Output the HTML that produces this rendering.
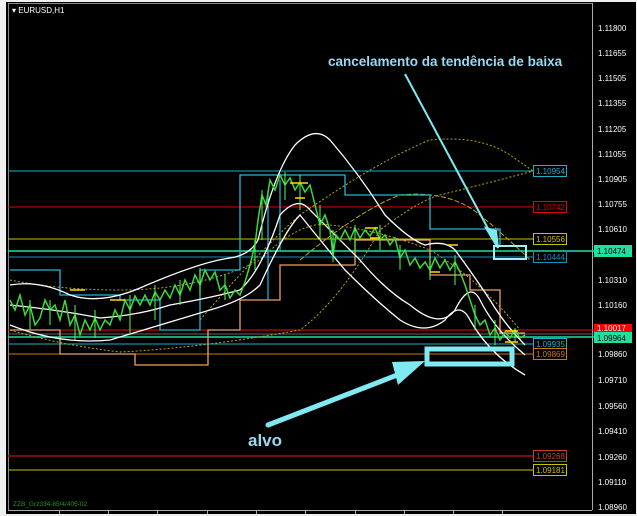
<!DOCTYPE html>
<html><head><meta charset="utf-8"><style>
html,body{margin:0;padding:0;background:#fff;}
svg{display:block;}
text{font-family:"Liberation Sans",sans-serif;}
</style></head><body>
<svg width="637" height="516" viewBox="0 0 637 516" xmlns="http://www.w3.org/2000/svg">
<rect width="637" height="516" fill="#f0f0f0"/>
<rect x="6" y="2" width="630" height="512" fill="#000"/>
<line x1="8.5" y1="3" x2="8.5" y2="510" stroke="#888"/>
<line x1="592.5" y1="3" x2="592.5" y2="510" stroke="#aaa"/>
<line x1="8" y1="3.5" x2="592" y2="3.5" stroke="#888"/>
<line x1="8" y1="510.5" x2="592" y2="510.5" stroke="#aaa"/>
<g stroke="#aaa">
<line x1="59.5" y1="510" x2="59.5" y2="514"/><line x1="108.5" y1="510" x2="108.5" y2="514"/><line x1="157.5" y1="510" x2="157.5" y2="514"/><line x1="207.5" y1="510" x2="207.5" y2="514"/><line x1="256.5" y1="510" x2="256.5" y2="514"/><line x1="305.5" y1="510" x2="305.5" y2="514"/><line x1="355.5" y1="510" x2="355.5" y2="514"/><line x1="404.5" y1="510" x2="404.5" y2="514"/><line x1="453.5" y1="510" x2="453.5" y2="514"/><line x1="502.5" y1="510" x2="502.5" y2="514"/>
</g>
<text x="12" y="13" fill="#fff" font-size="8">▾ EURUSD,H1</text>
<g fill="#fff" font-size="8">
<text x="598" y="31">1.11800</text><text x="598" y="56">1.11655</text><text x="598" y="81">1.11505</text><text x="598" y="106">1.11355</text><text x="598" y="132">1.11205</text><text x="598" y="157">1.11055</text><text x="598" y="182">1.10905</text><text x="598" y="207">1.10755</text><text x="598" y="232">1.10610</text><text x="598" y="283">1.10310</text><text x="598" y="308">1.10160</text><text x="598" y="357">1.09860</text><text x="598" y="383">1.09710</text><text x="598" y="409">1.09560</text><text x="598" y="434">1.09410</text><text x="598" y="460">1.09260</text><text x="598" y="485">1.09110</text><text x="598" y="510">1.08960</text>
</g>
<!-- horizontal levels -->
<line x1="8" y1="171" x2="533" y2="171" stroke="#1ab0c8"/>
<line x1="8" y1="207" x2="533" y2="207" stroke="#e00000"/>
<line x1="8" y1="239" x2="533" y2="239" stroke="#c8c000"/>
<line x1="8" y1="251" x2="597" y2="251" stroke="#20e0a0" stroke-width="1.5"/>
<line x1="8" y1="257" x2="533" y2="257" stroke="#1890b8"/>
<line x1="8" y1="330" x2="597" y2="330" stroke="#f00"/>
<line x1="8" y1="334" x2="597" y2="334" stroke="#666"/>
<line x1="8" y1="337" x2="597" y2="337" stroke="#20e0a0" stroke-width="1.5"/>
<line x1="8" y1="344" x2="533" y2="344" stroke="#1ab0c8"/>
<line x1="8" y1="354" x2="533" y2="354" stroke="#d07800"/>
<line x1="8" y1="456" x2="533" y2="456" stroke="#a01010" stroke-width="1.5"/>
<line x1="8" y1="470" x2="533" y2="470" stroke="#c8c000"/>
<!-- labels -->
<g font-size="8">
<rect x="533.5" y="165.5" width="33" height="11" fill="#000" stroke="#1ab0c8"/><text x="536" y="174" fill="#1ab0c8">1.10954</text>
<rect x="533.5" y="201.5" width="33" height="11" fill="#000" stroke="#e00000"/><text x="536" y="210" fill="#e00000">1.10742</text>
<rect x="533.5" y="233.5" width="33" height="11" fill="#000" stroke="#c8c000"/><text x="536" y="242" fill="#c8c000">1.10556</text>
<rect x="533.5" y="251.5" width="33" height="11" fill="#000" stroke="#1890b8"/><text x="536" y="260" fill="#1890b8">1.10444</text>
<rect x="533.5" y="338.5" width="33" height="11" fill="#000" stroke="#1ab0c8"/><text x="536" y="347" fill="#1ab0c8">1.09935</text>
<rect x="533.5" y="348.5" width="33" height="11" fill="#000" stroke="#d07800"/><text x="536" y="357" fill="#d07800">1.09869</text>
<rect x="533.5" y="450.5" width="33" height="11" fill="#000" stroke="#c04030"/><text x="536" y="459" fill="#c04030">1.09268</text>
<rect x="533.5" y="464.5" width="33" height="11" fill="#000" stroke="#c8c000"/><text x="536" y="473" fill="#c8c000">1.09181</text>
<rect x="594" y="245" width="38" height="12" fill="#20e0a0"/><text x="597" y="254" fill="#000">1.10474</text>
<rect x="594" y="324" width="38" height="8" fill="#f00"/><text x="597" y="331" fill="#fff">1.10017</text>
<rect x="594" y="332" width="38" height="11" fill="#20e0a0"/><text x="597" y="341" fill="#000">1.09964</text>
</g>
<!-- yellow dotted envelopes -->
<path d="M10 330 Q60 345 120 352 Q200 348 300 330 Q340 300 380 230 Q420 200 440 195 Q500 180 533 171" fill="none" stroke="#b8a800" stroke-dasharray="2,2"/>
<path d="M200 320 Q260 250 300 215 Q380 160 430 140 Q480 135 510 155 L533 171" fill="none" stroke="#b8a800" stroke-dasharray="2,2"/>
<path d="M300 260 Q360 210 400 195 Q450 190 480 215 Q510 240 530 260" fill="none" stroke="#b8a800" stroke-dasharray="5,2"/>
<path d="M10 280 Q60 290 120 290 Q200 290 260 260 Q300 220 330 225 Q380 230 430 250 Q480 280 520 330" fill="none" stroke="#b8a800" stroke-dasharray="2,2"/>
<!-- orange step -->
<path d="M10 330 L60 330 L60 354 L135 354 L135 365 L208 365 L208 330 L240 330 L240 300 L280 300 L280 265 L355 265 L355 240 L430 240 L430 275 L470 275 L470 290 L500 290 L500 333 L525 333" fill="none" stroke="#f0a060" stroke-width="1.3"/>
<!-- cyan step -->
<path d="M10 270 L60 270 L60 295 L120 295 L120 300 L160 300 L160 330 L200 330 L200 270 L240 270 L240 175 L345 175 L345 195 L430 195 L430 229 L500 229 L500 245" fill="none" stroke="#22b8d8" stroke-width="1.3"/>
<path d="M268 190 L268 300 M280 180 L280 250" stroke="#22b8d8" stroke-width="1.2"/>
<!-- white bands -->
<g fill="none" stroke="#fff" stroke-width="1.3">
<path d="M10 285 Q40 280 70 295 Q100 305 140 288 Q200 262 230 258 Q250 255 258 240 Q275 170 295 145 Q315 125 330 140 Q360 175 385 215 Q410 240 425 245 Q445 240 455 250 Q470 270 490 300 Q505 325 525 345"/>
<path d="M10 305 Q60 310 100 318 Q140 315 170 305 Q210 298 240 290 Q262 270 280 215 Q298 195 310 210 Q340 240 360 260 Q385 290 410 305 Q440 330 455 310 Q470 280 480 300 Q495 330 525 355"/>
<path d="M10 325 Q60 345 110 340 Q160 325 210 310 Q245 300 260 285 Q285 230 300 215 Q320 240 345 270 Q375 300 400 320 Q425 336 445 320 Q460 300 470 320 Q490 355 525 375"/>
</g>
<!-- price candles -->
<path d="M10 300 L15 310 L20 295 L25 315 L30 305 L35 325 L40 318 L45 300 L50 310 L55 305 L60 320 L65 300 L70 325 L75 315 L80 335 L85 320 L90 330 L95 318 L100 330 L105 320 L110 325 L115 310 L120 320 L125 300 L130 310 L135 296 L140 305 L145 295 L150 305 L155 292 L160 300 L165 290 L170 298 L175 285 L180 295 L185 280 L190 290 L195 275 L200 285 L205 270 L210 280 L215 272 L220 290 L225 285 L230 298 L235 290 L240 295 L245 282 L250 265 L255 245 L258 220 L262 195 L266 205 L270 180 L275 190 L280 175 L285 185 L290 178 L295 190 L300 182 L305 192 L310 185 L315 205 L320 225 L325 215 L330 230 L333 255 L336 235 L340 240 L345 230 L350 240 L355 228 L360 238 L365 230 L370 236 L375 228 L380 240 L385 235 L390 245 L395 238 L400 258 L405 250 L410 265 L415 258 L420 268 L425 262 L430 270 L435 258 L440 268 L445 260 L450 270 L455 262 L460 272 L465 285 L470 300 L475 315 L480 325 L485 320 L490 335 L495 328 L500 340 L505 332 L510 338 L515 330 L520 338 L525 335" fill="none" stroke="#3ed83e" stroke-width="1.5"/>
<path d="M30 300 V330 M50 300 V325 M75 305 V340 M95 310 V338 M130 295 V335 M155 285 V320 M180 280 V305 M200 268 V295 M225 275 V300 M255 240 V270 M262 190 V240 M285 172 V200 M300 175 V210 M320 205 V240 M333 230 V262 M355 225 V250 M380 225 V250 M400 245 V270 M430 255 V280 M455 255 V285 M475 305 V330 M495 320 V345 M515 328 V342" stroke="#4cff4c"/>
<!-- yellow small segments -->
<path d="M290 183 H308 M295 198 H305 M365 228 H378 M370 238 H380 M448 245 H458 M430 272 H440 M505 342 H518 M505 331 H518 M70 290 H85 M110 300 H125" stroke="#ffd800" stroke-width="1.5"/>
<!-- annotations -->
<path d="M405 74 L492 236" stroke="#80eaf2" stroke-width="2"/>
<path d="M486 228 L498 248 L496 231 Z" fill="#80eaf2" stroke="#80eaf2" stroke-width="2"/>
<rect x="494" y="246" width="32" height="13" fill="none" stroke="#a0f0f8" stroke-width="2"/>
<path d="M268 425 L405 372" stroke="#80eaf2" stroke-width="5" stroke-linecap="round"/>
<path d="M392 362 L425 361 L398 385 Z" fill="#80eaf2"/>
<rect x="427" y="349" width="85" height="15" fill="none" stroke="#80eaf2" stroke-width="5"/>
<text x="328" y="66" fill="#9ad8f2" font-size="13.5" font-weight="bold">cancelamento da tendência de baixa</text>
<text x="248" y="446" fill="#9ad8f2" font-size="17" font-weight="bold">alvo</text>
<text x="13" y="506" fill="#1a9a1a" font-size="6.5">ZZB_Grz334-85/4/405-02</text>
</svg>
</body></html>
